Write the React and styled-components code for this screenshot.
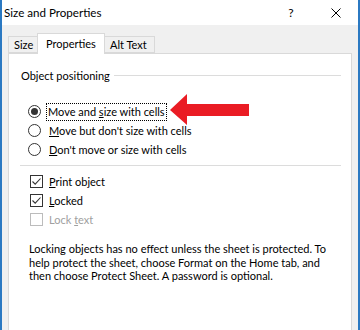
import React from 'react';
import styled, { createGlobalStyle } from 'styled-components';

const GlobalStyle = createGlobalStyle`
  html, body {
    margin: 0;
    padding: 0;
    background: #fff;
  }
`;

const Window = styled.div`
  width: 360px;
  height: 330px;
  box-sizing: border-box;
  border-left: 2px solid #2b79c2;
  border-right: 2px solid #2b79c2;
  background: #f0f0f0;
  overflow: hidden;
  display: flex;
  flex-direction: column;
  font-family: Lato, "Noto Sans", sans-serif;
  font-size: 11px;
  color: #000;
`;

const TitleBar = styled.div`
  height: 25px;
  flex: none;
  background: #fff;
  display: flex;
  align-items: center;
  padding-left: 2px;
`;

const Title = styled.div`
  flex: 1;
  font-size: 11.6px;
`;

const CaptionButton = styled.div`
  width: ${p => p.w}px;
  height: 25px;
  display: flex;
  align-items: center;
  justify-content: center;
  font-size: 12px;
`;

const Body = styled.div`
  flex: 1;
  display: flex;
  flex-direction: column;
  padding: 8px 6px 0 6px;
  min-height: 0;
`;

const TabStrip = styled.div`
  display: flex;
  align-items: flex-end;
  height: 20px;
  flex: none;
`;

const Tab = styled.div`
  box-sizing: border-box;
  width: ${p => p.w}px;
  height: ${p => (p.active ? 21 : 17)}px;
  margin-bottom: ${p => (p.active ? -1 : 0)}px;
  border: 1px solid #d9d9d9;
  border-bottom: ${p => (p.active ? 'none' : '1px solid #d9d9d9')};
  margin-left: ${p => (p.active ? -1 : 0)}px;
  margin-right: ${p => (p.active ? -1 : 0)}px;
  background: ${p => (p.active ? '#fff' : '#f0f0f0')};
  position: relative;
  z-index: ${p => (p.active ? 2 : 1)};
  padding-left: ${p => (p.active ? 8 : 5)}px;
  display: flex;
  align-items: center;
  padding-bottom: ${p => (p.active ? 2 : 0)}px;
`;

const Panel = styled.div`
  flex: 1;
  background: #fff;
  border: 1px solid #d9d9d9;
  border-bottom: none;
  padding: 13px 10px 0 12px;
  display: flex;
  flex-direction: column;
`;

const GroupHeader = styled.div`
  display: flex;
  align-items: center;
  gap: 4px;
  height: 16px;
`;

const GroupLine = styled.div`
  flex: 1;
  height: 1px;
  background: #dcdcdc;
`;

const OptionList = styled.div`
  display: flex;
  flex-direction: column;
  margin-top: ${p => p.top}px;
  padding-left: ${p => p.indent}px;
`;

const OptionRow = styled.div`
  display: flex;
  align-items: center;
  height: 19px;
  color: ${p => (p.disabled ? '#a0a0a0' : '#000')};
`;

const RadioCircle = styled.span`
  box-sizing: border-box;
  width: 13px;
  height: 13px;
  border: 1px solid #333;
  border-radius: 50%;
  background: #fff;
  display: flex;
  align-items: center;
  justify-content: center;
  margin-right: 8px;

  &::after {
    content: '';
    display: ${p => (p.checked ? 'block' : 'none')};
    width: 7px;
    height: 7px;
    border-radius: 50%;
    background: #333;
  }
`;

const CheckBox = styled.span`
  box-sizing: border-box;
  width: 13px;
  height: 13px;
  border: 1px solid ${p => (p.disabled ? '#bcbcbc' : '#333')};
  background: #fff;
  display: flex;
  align-items: center;
  justify-content: center;
  margin-right: 6px;
`;

const FocusLabel = styled.span`
  outline: 1px dotted #000;
  outline-offset: 0;
  padding: 0 1px;
  margin-left: -2px;
  line-height: 16px;
`;

const Arrow = styled.svg`
  margin-left: 4px;
  margin-top: -4px;
  flex: none;
`;

const Separator = styled.div`
  height: 1px;
  background: #dcdcdc;
  margin-top: 6px;
  margin-left: -1px;
`;

const Note = styled.p`
  margin: 13px 0 0 8px;
  line-height: 13.5px;
`;

const Check = () => (
  <svg width="11" height="11" viewBox="0 0 11 11">
    <polyline points="1.5,5.5 4.2,8.2 9.5,2.5" fill="none" stroke="#333" strokeWidth="1.1" />
  </svg>
);

const Radio = ({ checked, children }) => (
  <OptionRow>
    <RadioCircle checked={checked} />
    {children}
  </OptionRow>
);

const CheckOption = ({ checked, disabled, children }) => (
  <OptionRow disabled={disabled}>
    <CheckBox disabled={disabled}>{checked && <Check />}</CheckBox>
    {children}
  </OptionRow>
);

export default function App() {
  return (
    <>
      <GlobalStyle />
      <Window>
        <TitleBar>
          <Title>Size and Properties</Title>
          <CaptionButton w={46}>?</CaptionButton>
          <CaptionButton w={44}>
            <svg width="10" height="10" viewBox="0 0 10 10">
              <path d="M0.5 0.5 L9.5 9.5 M9.5 0.5 L0.5 9.5" stroke="#000" strokeWidth="1" />
            </svg>
          </CaptionButton>
        </TitleBar>
        <Body>
          <TabStrip>
            <Tab w={30}>Size</Tab>
            <Tab w={68} active>Properties</Tab>
            <Tab w={51}>Alt Text</Tab>
          </TabStrip>
          <Panel>
            <GroupHeader>
              <span>Object positioning</span>
              <GroupLine />
            </GroupHeader>
            <OptionList top={19} indent={7}>
              <Radio checked>
                <FocusLabel>Move and <u>s</u>ize with cells</FocusLabel>
                <Arrow width="79" height="31" viewBox="0 0 79 31">
                  <polygon points="0,16 17,0 17,10 79,10 79,22 17,22 17,31" fill="#ea1c24" />
                </Arrow>
              </Radio>
              <Radio><span><u>M</u>ove but don't size with cells</span></Radio>
              <Radio><span><u>D</u>on't move or size with cells</span></Radio>
            </OptionList>
            <Separator />
            <OptionList top={6} indent={9}>
              <CheckOption checked><span><u>P</u>rint object</span></CheckOption>
              <CheckOption checked><span><u>L</u>ocked</span></CheckOption>
              <CheckOption disabled><span>Lock <u>t</u>ext</span></CheckOption>
            </OptionList>
            <Note>
              Locking objects has no effect unless the sheet is protected. To help protect the sheet, choose Format on the Home tab, and then choose Protect Sheet. A password is optional.
            </Note>
          </Panel>
        </Body>
      </Window>
    </>
  );
}
